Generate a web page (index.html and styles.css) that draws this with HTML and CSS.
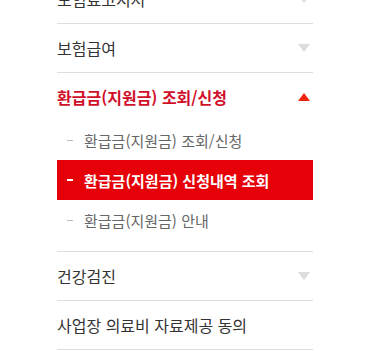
FILE: index.html
```html
<!DOCTYPE html>
<html lang="ko">
    <head>
        <meta charset="UTF-8">
        <title>환급금 메뉴</title>
<link rel="stylesheet" href="styles.css">
    </head>
    <body>
        <ul class="menu">
            <li class="item">
                <a class="title" href="#">보험료고지서<span class="arrow"></span></a>
            </li>
            <li class="item">
                <a class="title" href="#">보험급여<span class="arrow"></span></a>
            </li>
            <li class="item open">
                <a class="title" href="#">환급금(지원금) 조회/신청<span class="arrow"></span></a>
                <ul class="sub">
                    <li><a href="#">환급금(지원금) 조회/신청</a></li>
                    <li class="on"><a href="#">환급금(지원금) 신청내역 조회</a></li>
                    <li><a href="#">환급금(지원금) 안내</a></li>
                </ul>
            </li>
            <li class="item">
                <a class="title" href="#">건강검진<span class="arrow"></span></a>
            </li>
            <li class="item">
                <a class="title" href="#">사업장 의료비 자료제공 동의</a>
            </li>
        </ul>
    </body>
</html>
```

FILE: styles.css
```css
html,body {
    margin: 0;
    background: #fff;
    font-family: "Noto Sans CJK KR", "Noto Sans", sans-serif;
}
a {
    color: inherit;
    text-decoration: none;
}
ul {
    list-style: none;
    margin: 0;
    padding: 0;
}

.menu {
    width: 256px;
    margin: -25px 0 0 57px;
}
.menu .item {
    border-bottom: 1px solid #ddd;
}
.menu .title {
    display: flex;
    align-items: center;
    justify-content: space-between;
    height: 48px;
    font-size: 16px;
    color: #333;
}
.menu .arrow {
    width: 0;
    height: 0;
    margin-right: 3px;
    border-left: 6px solid transparent;
    border-right: 6px solid transparent;
    border-top: 8px solid #ddd;
}
.menu .open .title {
    height: 47px;
    color: #d0102a;
    font-weight: bold;
}
.menu .open .arrow {
    border-top: 0;
    border-bottom: 8px solid #f0230f;
}

.sub {
    padding-bottom: 11px;
}
.sub li a {
    display: flex;
    align-items: center;
    height: 40px;
    padding-left: 10px;
    font-size: 15px;
    color: #666;
}
.sub li a::before {
    content: "";
    width: 6px;
    height: 1px;
    margin-right: 11px;
    background: #bbb;
}
.sub li.on a {
    background: #e60008;
    color: #fff;
    font-weight: bold;
}
.sub li.on a::before {
    height: 2px;
    background: #fff;
}
```
